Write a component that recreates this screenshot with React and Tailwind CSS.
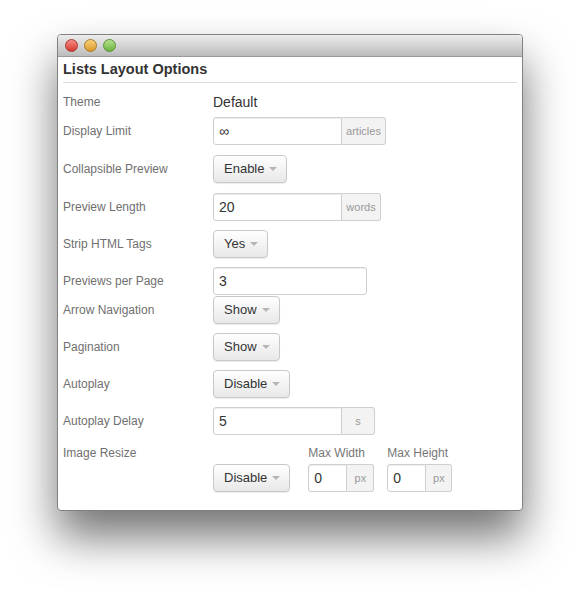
import React from 'react';

const labelCls = 'w-[150px] shrink-0 text-[12px] text-[#707070]';

const Caret = () => (
  <span className="ml-[5px] inline-block h-0 w-0 border-x-[4px] border-t-[4px] border-x-transparent border-t-[#b5b5b5]" />
);

const DropButton = ({ value }) => (
  <button className="flex h-7 items-center rounded-[4px] border border-[#c8c8c8] bg-gradient-to-b from-white to-[#e8e8e8] pl-[10px] pr-[9px] text-[13px] text-[#333] shadow-[0_1px_1px_rgba(0,0,0,0.08)]">
    {value}
    <Caret />
  </button>
);

const TextInput = ({ value, width, addon, addonWidth }) => (
  <div className="flex h-7">
    <div
      className={`flex items-center border border-[#cfcfcf] bg-white pl-[5px] text-[14px] text-[#333] shadow-[inset_0_1px_1px_rgba(0,0,0,0.07)] ${
        addon ? 'rounded-l-[3px]' : 'rounded-[3px]'
      }`}
      style={{ width }}
    >
      {value}
    </div>
    {addon && (
      <div
        className="flex items-center justify-center rounded-r-[3px] border border-l-0 border-[#cfcfcf] bg-[#f3f3f3] text-[11px] text-[#999]"
        style={{ width: addonWidth }}
      >
        {addon}
      </div>
    )}
  </div>
);

const rows = [
  { label: 'Theme', mt: 'mt-[5px]', text: 'Default' },
  { label: 'Display Limit', mt: 'mt-[1px]', input: { value: '∞', width: 129, addon: 'articles', addonWidth: 44 } },
  { label: 'Collapsible Preview', mt: 'mt-[10px]', button: 'Enable' },
  { label: 'Preview Length', mt: 'mt-[10px]', input: { value: '20', width: 129, addon: 'words', addonWidth: 39 } },
  { label: 'Strip HTML Tags', mt: 'mt-[9px]', button: 'Yes' },
  { label: 'Previews per Page', mt: 'mt-[9px]', input: { value: '3', width: 154 } },
  { label: 'Arrow Navigation', mt: 'mt-[1px]', button: 'Show' },
  { label: 'Pagination', mt: 'mt-[9px]', button: 'Show' },
  { label: 'Autoplay', mt: 'mt-[9px]', button: 'Disable' },
  { label: 'Autoplay Delay', mt: 'mt-[9px]', input: { value: '5', width: 129, addon: 's', addonWidth: 33 } },
];

const Light = ({ from, to, ring }) => (
  <span className={`h-[13px] w-[13px] rounded-full border bg-gradient-to-b ${from} ${to} ${ring}`} />
);

export default function App() {
  return (
    <div className="min-h-[589px] bg-white pl-[57px] pt-[34px] font-['Liberation_Sans',Arial,sans-serif]">
      <div className="w-[466px] overflow-hidden rounded-[4px] border border-[#808080] bg-white shadow-[0_26px_45px_rgba(0,0,0,0.55)]">
        {/* title bar */}
        <div className="flex h-[22px] items-center gap-[6px] border-b border-[#9a9a9a] bg-gradient-to-b from-[#ececec] to-[#bcbcbc] pl-[7px]">
          <Light from="from-[#f48a85]" to="to-[#d6362f]" ring="border-[#a83a34]" />
          <Light from="from-[#f7d27a]" to="to-[#dc9a1e]" ring="border-[#a87a26]" />
          <Light from="from-[#b5e28a]" to="to-[#6cb33e]" ring="border-[#5a8f39]" />
        </div>

        <div className="mx-[5px] flex h-[26px] items-center border-b border-[#dcdcdc] text-[14.5px] font-bold text-[#333]">
          Lists Layout Options
        </div>

        <div className="px-[5px] pb-[18px]">
          {rows.map((row) => (
            <div key={row.label} className={`flex h-7 items-center ${row.mt}`}>
              <span className={labelCls}>{row.label}</span>
              {row.text && <span className="text-[14px] text-[#333]">{row.text}</span>}
              {row.button && <DropButton value={row.button} />}
              {row.input && <TextInput {...row.input} />}
            </div>
          ))}

          {/* image resize */}
          <div className="mt-[10px] flex">
            <span className={`${labelCls} leading-4`}>Image Resize</span>
            <div className="mt-[19px]">
              <DropButton value="Disable" />
            </div>
            <div className="ml-[18px] flex flex-col">
              <span className="mb-[3px] text-[12px] leading-4 text-[#777]">Max Width</span>
              <TextInput value="0" width={39} addon="px" addonWidth={27} />
            </div>
            <div className="ml-[13px] flex flex-col">
              <span className="mb-[3px] text-[12px] leading-4 text-[#777]">Max Height</span>
              <TextInput value="0" width={39} addon="px" addonWidth={26} />
            </div>
          </div>
        </div>
      </div>
    </div>
  );
}
